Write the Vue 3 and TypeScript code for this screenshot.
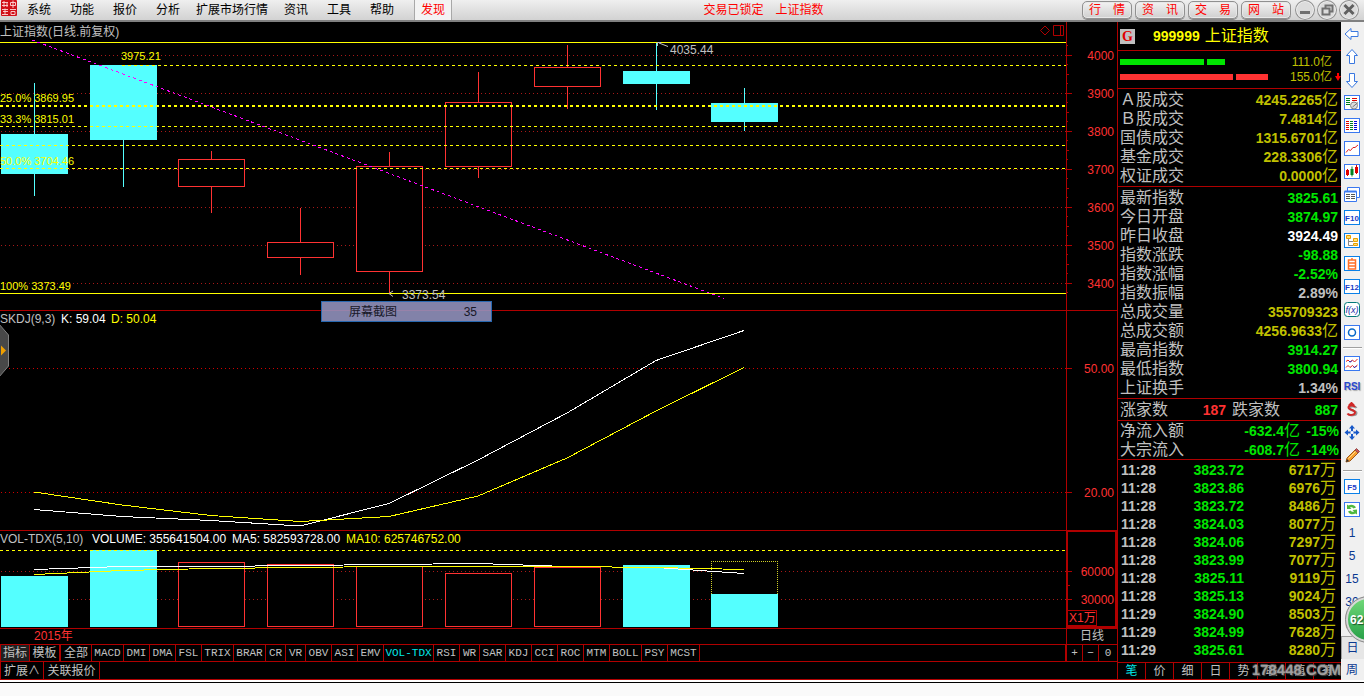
<script setup lang="ts">
interface Candle { x: number; top: number; bottom: number; high: number; low: number; up: boolean; volTop: number }
interface Quote { label: string; value: string; unit?: string; tone: string }
interface Tool { name: string; art?: string; text?: string; cls?: string; sep?: boolean }

const menus = ['系统', '功能', '报价', '分析', '扩展市场行情', '资讯', '工具', '帮助']
const pills = ['行情', '资讯', '交易', '网站']

const candles: Candle[] = [
  { x: 1, top: 134, bottom: 174, high: 83, low: 196, up: false, volTop: 576 },
  { x: 90, top: 65, bottom: 140, high: 65, low: 187, up: false, volTop: 550 },
  { x: 178, top: 159, bottom: 187, high: 151, low: 213, up: true, volTop: 562 },
  { x: 267, top: 242, bottom: 258, high: 208, low: 275, up: true, volTop: 564 },
  { x: 356, top: 166, bottom: 272, high: 152, low: 293, up: true, volTop: 566 },
  { x: 445, top: 102, bottom: 167, high: 72, low: 178, up: true, volTop: 573 },
  { x: 534, top: 67, bottom: 87, high: 45, low: 109, up: true, volTop: 567 },
  { x: 623, top: 71, bottom: 84, high: 43, low: 110, up: false, volTop: 565 },
  { x: 711, top: 103, bottom: 122, high: 88, low: 131, up: false, volTop: 594 },
]
const priceGrid = [4000, 3900, 3800, 3700, 3600, 3500, 3400].map((label, i) => ({ label, y: 55 + i * 38 }))
const minorTicks = Array.from({ length: 27 }, (_, i) => ({ y: Math.round(46 + i * 9.5), w: i % 2 ? 0 : 1 }))
const retrace = [
  { text: '25.0% 3869.95', y: 102 },
  { text: '33.3% 3815.01', y: 123 },
  { text: '50.0% 3704.46', y: 165 },
  { text: '100% 3373.49', y: 290 },
]

const tabs = ['MACD', 'DMI', 'DMA', 'FSL', 'TRIX', 'BRAR', 'CR', 'VR', 'OBV', 'ASI', 'EMV', 'VOL-TDX', 'RSI', 'WR', 'SAR', 'KDJ', 'CCI', 'ROC', 'MTM', 'BOLL', 'PSY', 'MCST']
const tabWidth = (t: string) => `${t.length * 6 + 8}px`

const turnover: Quote[] = [
  { label: 'Ａ股成交', value: '4245.2265', unit: '亿', tone: 'olive' },
  { label: 'Ｂ股成交', value: '7.4814', unit: '亿', tone: 'olive' },
  { label: '国债成交', value: '1315.6701', unit: '亿', tone: 'olive' },
  { label: '基金成交', value: '228.3306', unit: '亿', tone: 'olive' },
  { label: '权证成交', value: '0.0000', unit: '亿', tone: 'olive' },
]
const quotes: Quote[] = [
  { label: '最新指数', value: '3825.61', tone: 'green' },
  { label: '今日开盘', value: '3874.97', tone: 'green' },
  { label: '昨日收盘', value: '3924.49', tone: 'white' },
  { label: '指数涨跌', value: '-98.88', tone: 'green' },
  { label: '指数涨幅', value: '-2.52%', tone: 'green' },
  { label: '指数振幅', value: '2.89%', tone: 'gray' },
  { label: '总成交量', value: '355709323', tone: 'olive' },
  { label: '总成交额', value: '4256.9633', unit: '亿', tone: 'olive' },
  { label: '最高指数', value: '3914.27', tone: 'green' },
  { label: '最低指数', value: '3800.94', tone: 'green' },
  { label: '上证换手', value: '1.34%', tone: 'gray' },
]
const flows = [
  { label: '净流入额', value: '-632.4', pct: '-15%' },
  { label: '大宗流入', value: '-608.7', pct: '-14%' },
]
const ticks = [
  ['11:28', '3823.72', '6717'], ['11:28', '3823.86', '6976'], ['11:28', '3823.72', '8486'],
  ['11:28', '3824.03', '8077'], ['11:28', '3824.06', '7297'], ['11:28', '3823.99', '7077'],
  ['11:28', '3825.11', '9119'], ['11:28', '3825.13', '9024'], ['11:29', '3824.90', '8503'],
  ['11:29', '3824.99', '7628'], ['11:29', '3825.61', '8280'],
]
const sideTabs = ['笔', '价', '细', '日', '势', '联', '值', '筹']

const box = (c = '#3a78f0') => `<rect x=".5" y=".5" width="15" height="14" fill="#fff" stroke="${c}"/>`
const label = (t: string) => `${box('#0a80e8')}<text x="8" y="11" font-size="8" font-weight="700" text-anchor="middle" fill="#1a3cc8">${t}</text>`
const rows = (x: number, c: string) => [3, 5, 7, 9, 11].map(y => `<path d="M${x} ${y}.5h3" stroke="${c}"/>`).join('')

const tools: Tool[] = [
  { name: '后退', art: '<path d="M1 8 7 2.500v3h7v5H7v3z" fill="#fff" stroke="#3a78e0"/>' },
  { name: '上移', art: '<path d="M8 .5 13.500 6.500h-3v8h-5v-8h-3z" fill="#fff" stroke="#3a78e0"/>' },
  { name: '下移', art: '<path d="M8 15.500 13.500 9.500h-3v-8h-5v8h-3z" fill="#fff" stroke="#3a78e0"/>' },
  { name: '报价', art: `${box()}<path d="M2 3.500h4M2 5.500h4M2 7.500h4M2 9.500h4" stroke="#008020"/><path d="M8 3.500h5M8 5.500h5" stroke="#e00000"/><circle cx="10" cy="10.500" r="3.500" fill="#ddd" stroke="#888"/><path d="M8.500 12 14 7.500" stroke="#777"/>` },
  { name: '列表', art: box() + rows(2, '#e00000') + rows(6, '#008020') + rows(10, '#0000e0') },
  { name: '分时', art: `${box()}<path d="M2 11.500 4.500 8.500 6.500 9.500 9 6.500h2L14 4" fill="none" stroke="#e02020"/>` },
  { name: 'K线', art: `${box()}<path d="M2 6h3v5H2zM11 3h3v6h-3z" fill="#e00000"/><path d="M3.500 5v7M12.500 1v9" stroke="#e00000"/><path d="M6.500 5h3v6h-3z" fill="#008020"/><path d="M8 2.500v10" stroke="#008020"/>` },
  { name: '多窗', art: '<path d="M3.500.5h12v10h-12z" fill="#fff" stroke="#3a78f0"/><path d="M.5 4.500h12v10H.5z" fill="#fff" stroke="#3a78f0"/><path d="M.5 4.500h12" stroke="#3a78f0" stroke-width="2"/><path d="M2 7.500h4M7 7.500h4M2 9.500h4M7 9.500h4M2 11.500h4M7 11.500h4" stroke="#555"/>' },
  { name: 'F10', art: label('F10') },
  { name: '树形', art: `${box('#0a80e8')}<path d="M4.500 5v7.500H9M4.500 8.500H9" fill="none" stroke="#888"/><path d="M2.500 2.500h4v3h-4zM9.500 5.500h4v3h-4zM9.500 10.500h4v2h-4z" fill="#ffe070" stroke="#e8a000"/>` },
  { name: '自选', art: `${box('#0a80e8')}<path d="M4.500 4h7v9h-7zM4.500 7h7M4.500 10h7M8 4V2" fill="none" stroke="#ff7028" stroke-width="1.500"/>` },
  { name: 'F12', art: label('F12') },
  { name: '公式', art: '<rect x=".5" y=".5" width="15" height="14" rx="3" fill="#fff" stroke="#007878"/><text x="8" y="11" font-size="9" text-anchor="middle" font-style="italic" fill="#1a2ca8">f(x)</text>' },
  { name: '圆形', art: `${box()}<circle cx="8" cy="7.500" r="3.500" fill="none" stroke="#0868c8" stroke-width="1.500"/>`, sep: true },
  { name: '叠加', art: `${box()}<path d="M2 5.500 4 4l2 2 2.500-2 2 2L13.500 3" fill="none" stroke="#e02020"/><path d="M2 11.500 4 9.500l2 2 2.500-2 2 2L13.500 9" fill="none" stroke="#e02020"/><path d="M5 5.500 6.500 6 8 4.500M9.500 11 11 11.500 12.500 10" fill="none" stroke="#2030d0"/>` },
  { name: 'RSI指标', text: 'RSI', cls: 'rsi' },
  { name: '资金', art: '<path d="M12.500 6c-1-2-7-2-7 .5S12.500 8 12.500 11 5.500 14 4.500 12" fill="none" stroke="#999" stroke-width="2"/><path d="M5 3.500 7.500 1 10 3.500M11 5c-1-2-6.500-2-6.500.5s6.500 2 6.500 5-6.500 3-7.500 1" fill="none" stroke="#d02828" stroke-width="2"/>' },
  { name: '移动', art: '<path d="M8 0 11 3.500H9V6.500h3V4.500L15.500 7.500 12 10.500v-2H9v3h2L8 15 5 11.500h2v-3H4v2L.5 7.500 4 4.500v2h3V3.500H5z" fill="#1858c8"/><circle cx="8" cy="7.500" r="1.500" fill="#fff"/>' },
  { name: '画线', art: '<path d="M2 14 3 10 11 2l3 3-8 8z" fill="#f8a030" stroke="#a05818"/><path d="M11 2l1.500-1.500 3 3L14 5z" fill="#d05050" stroke="#905050"/><path d="M2 14 3 11l2 2z" fill="#333"/><path d="M4.500 10.500 11.500 3.500" stroke="#ffe090"/>', sep: true },
  { name: 'F5', art: label('F5') },
  { name: '刷新', art: `${box()}<path d="M3 7V2.500l1.500 1C7 2 10.500 2.500 12 5.500L9.500 6.500C8.500 5 7 5 6 5.500L7.500 7z" fill="#50b840"/><path d="M13 7.500V12.500l-1.500-1C9 13 5.500 12.500 4 9.500L6.500 8.500C7.500 10 9 10 10 9.500L8.500 8z" fill="#50b840"/>` },
  { name: '1分钟', text: '1' },
  { name: '5分钟', text: '5' },
  { name: '15分钟', text: '15' },
  { name: '30分钟', text: '30' },
  { name: '60分钟', text: '60' },
  { name: '日线', text: '日', cls: 'on' },
  { name: '周线', text: '周', cls: 'week' },
]
</script>

<template>
  <div class="app">
    <header class="top">
      <svg class="logo" width="16" height="16" viewBox="0 0 16 16" aria-hidden="true">
        <rect width="16" height="16" rx="1" fill="#d01018" />
        <path d="M1 2.500h6M3 1v6M1 5.500h6M6 3v4M9.500 2.500h5v3h-5zM12 .5V8M1 9.500h6M2 11.500h5M4 8.500v6M1 14.500h6M9 9.500h6M10 11.500h4v3h-4z" fill="none" stroke="#ffd8d8" stroke-width=".9" />
      </svg>
      <nav class="menus">
        <button v-for="m in menus" :key="m" type="button">{{ m }}</button>
      </nav>
      <button class="found" type="button">发现</button>
      <div class="state"><span>交易已锁定</span><span>上证指数</span></div>
      <nav class="pills">
        <button v-for="p in pills" :key="p" type="button"><span>{{ p[0] }}</span><span>{{ p[1] }}</span></button>
      </nav>
      <div class="wins">
        <button type="button" aria-label="最小化"><svg width="20" height="20"><path d="M5 12.500h10" stroke="#707070" stroke-width="3" /></svg></button>
        <button type="button" aria-label="还原"><svg width="20" height="20"><path d="M8.500 8V5.500h7v6H13M5.500 8.500h7v6h-7z" fill="none" stroke="#707070" stroke-width="2" /></svg></button>
        <button type="button" aria-label="关闭"><svg width="20" height="20"><path d="M5.500 5 14.500 14M14.500 5 5.500 14" stroke="#606060" stroke-width="3" /></svg></button>
      </div>
    </header>

    <main class="body">
      <section class="left">
        <div class="panel">
          <svg class="plot price">
            <g transform="translate(0,-22)">
              <line v-for="g in priceGrid" :key="g.label" class="dots" x1="1" x2="100%" :y1="g.y + .5" :y2="g.y + .5" />
              <g v-for="c in candles" :key="c.x" :class="c.up ? 'up' : 'down'">
                <rect class="wick" :x="c.x + 33" :y="c.high" width="1" :height="c.low - c.high" />
                <rect v-if="c.up" class="hollow" :x="c.x + .5" :y="c.top + .5" width="66" :height="c.bottom - c.top - 1" />
                <rect v-else class="solid" :x="c.x" :y="c.top" width="67" :height="c.bottom - c.top" />
              </g>
              <line class="yl" x1="0" x2="100%" y1="42.500" y2="42.500" />
              <line class="yl dash" x1="122" x2="100%" y1="65.500" y2="65.500" />
              <line class="yl dash thick" x1="0" x2="100%" y1="106" y2="106" />
              <line class="yl dash" x1="0" x2="100%" y1="126.500" y2="126.500" />
              <line class="yl dash" x1="0" x2="100%" y1="145.500" y2="145.500" />
              <line class="yl dash" x1="0" x2="100%" y1="168.500" y2="168.500" />
              <line class="yl" x1="0" x2="100%" y1="293.500" y2="293.500" />
              <line class="trend" x1="32" y1="40" x2="724" y2="298.500" />
              <text class="t-gray" x="0" y="36">上证指数(日线.前复权)</text>
              <text class="t-small" x="121" y="60">3975.21</text>
              <text v-for="r in retrace" :key="r.text" class="t-small" x="0" :y="r.y">{{ r.text }}</text>
              <path class="mark" d="M657.500 46V42.500H661M659 43 668 46.500M393 291 389 293.500 393 296.500" />
              <text class="t-gray" x="670" y="54">4035.44</text>
              <text class="t-gray" x="402" y="299">3373.54</text>
            </g>
          </svg>
          <svg class="corner" width="24" height="12" aria-hidden="true">
            <path d="M5 1 9.500 5.500 5 10 .5 5.500zM13.500.5h10v10h-10zM20.500.5v10" fill="none" stroke="#b00000" />
          </svg>
          <svg class="axis price">
            <g transform="translate(0,-22)">
              <path v-for="(t, i) in minorTicks" :key="i" class="tick" :d="`M0 ${t.y - .5}h${t.w ? 1 : 2}`" />
              <g v-for="g in priceGrid" :key="g.label">
                <path class="tick" :d="`M0 ${g.y + .5}h5`" />
                <text x="47" :y="g.y + 5">{{ g.label }}</text>
              </g>
            </g>
          </svg>
          <div class="hint"><span>屏幕截图</span><span>35</span></div>
        </div>

        <div class="panel ruled">
          <svg class="plot skdj">
            <g transform="translate(0,-311)">
              <line class="dots bright" x1="1" x2="100%" y1="368.500" y2="368.500" />
              <line class="dots bright" x1="1" x2="100%" y1="492.500" y2="492.500" />
              <polyline class="w" points="34,509.500 122,516.500 211,520.500 300,526 389,503.500 478,460 567,413 656,360.500 744,330.500" />
              <polyline class="y" points="34,492 122,505 211,515.500 300,521.500 389,516.500 478,496 567,458 656,411 744,367.500" />
              <text class="t-gray" x="0" y="323">SKDJ(9,3)</text>
              <text class="t-white" x="61" y="323">K: 59.04</text>
              <text class="t-yellow" x="111" y="323">D: 50.04</text>
            </g>
          </svg>
          <svg class="axis skdj">
            <g transform="translate(0,-311)">
              <path class="tick" d="M0 368.500h5M0 492.500h5" />
              <text x="47" y="373">50.00</text>
              <text x="47" y="497">20.00</text>
            </g>
          </svg>
          <button class="drawer" type="button" aria-label="展开侧栏">
            <svg width="10" height="56" viewBox="0 0 10 56">
              <path d="M-1 1 8.500 12v31L-1 54z" fill="#484848" stroke="#808080" />
              <path d="M1 22.500 6 27.500 1 32.500z" fill="#f0a000" />
            </svg>
          </button>
        </div>

        <div class="panel ruled">
          <svg class="plot vol">
            <g transform="translate(0,-531)">
              <line class="dots" x1="1" x2="100%" y1="571.500" y2="571.500" />
              <line class="dots" x1="1" x2="100%" y1="599.500" y2="599.500" />
              <rect x="711" y="561" width="67" height="34" fill="#000" />
              <path class="est" d="M711 561.500H778M711.500 561V594M777.500 561V594" />
              <g v-for="c in candles" :key="c.x" :class="c.up ? 'up' : 'down'">
                <rect v-if="c.up" class="hollow" :x="c.x + .5" :y="c.volTop + .5" width="66" :height="626 - c.volTop" />
                <rect v-else class="solid" :x="c.x" :y="c.volTop" width="67" :height="627 - c.volTop" />
              </g>
              <line class="yl dash" x1="0" x2="100%" y1="550.500" y2="550.500" />
              <polyline class="w" points="34,569.500 122,566.500 211,566.500 300,565.500 389,564.500 478,563.500 567,566.500 656,567.500 744,573.500" />
              <polyline class="y" points="34,574.500 122,570.500 211,568.500 300,567.500 389,566.500 567,566.500 656,567.500 744,569.500" />
              <text class="t-gray" x="0" y="543">VOL-TDX(5,10)</text>
              <text class="t-white" x="92" y="543">VOLUME: 355641504.00</text>
              <text class="t-white" x="232" y="543">MA5: 582593728.00</text>
              <text class="t-yellow" x="346" y="543">MA10: 625746752.00</text>
            </g>
          </svg>
          <div class="axis boxed">
            <svg width="47" height="94">
              <g transform="translate(0,-532)">
                <path class="tick" d="M0 571.500h4M0 585.500h2M0 599.500h4" />
                <text x="46" y="576">60000</text>
                <text x="46" y="604">30000</text>
              </g>
            </svg>
            <span class="scale">X1万</span>
          </div>
        </div>

        <div class="daterow"><span class="year">2015年</span><span class="period">日线</span></div>

        <div class="tabrow">
          <button class="cjk first" type="button">指标</button>
          <button class="cjk second" type="button">模板</button>
          <button class="cjk" type="button">全部</button>
          <button v-for="t in tabs" :key="t" type="button" :class="{ sel: t === 'VOL-TDX' }" :style="{ width: tabWidth(t) }">{{ t }}</button>
          <div class="zoomers">
            <button type="button">+</button><button type="button">−</button><button type="button">0</button>
          </div>
        </div>
        <div class="tabrow low">
          <button class="ext" type="button">扩展∧</button>
          <button class="link" type="button">关联报价</button>
        </div>
      </section>

      <aside class="side">
        <div class="ident"><b class="g">G</b><b class="code">999999</b><span>上证指数</span></div>
        <div class="bars">
          <div class="bar buy"><i class="long"></i><i class="short"></i><span>111.0亿</span></div>
          <div class="bar sell"><i class="long"></i><i class="short"></i><span>155.0亿</span>
            <svg width="6" height="8"><path d="M2 0h2v3h2L3 8 0 3h2z" fill="#f00" /></svg>
          </div>
        </div>
        <table class="block">
          <tbody>
            <tr v-for="q in turnover" :key="q.label"><th scope="row">{{ q.label }}</th><td :class="q.tone"><b>{{ q.value }}</b>{{ q.unit }}</td></tr>
          </tbody>
        </table>
        <table class="block">
          <tbody>
            <tr v-for="q in quotes" :key="q.label"><th scope="row">{{ q.label }}</th><td :class="q.tone"><b>{{ q.value }}</b>{{ q.unit }}</td></tr>
          </tbody>
        </table>
        <div class="updown"><span>涨家数</span><b class="red">187</b><span class="fall">跌家数</span><b class="green">887</b></div>
        <table class="block flows">
          <tbody>
            <tr v-for="f in flows" :key="f.label"><th scope="row">{{ f.label }}</th><td class="green"><b>{{ f.value }}</b>亿</td><td class="green pct"><b>{{ f.pct }}</b></td></tr>
          </tbody>
        </table>
        <table class="ticks">
          <tbody>
            <tr v-for="(t, i) in ticks" :key="i"><td class="gray"><b>{{ t[0] }}</b></td><td class="green"><b>{{ t[1] }}</b></td><td class="olive"><b>{{ t[2] }}</b>万</td></tr>
          </tbody>
        </table>
        <nav class="sidetabs">
          <button v-for="(s, i) in sideTabs" :key="s" type="button" :class="{ sel: i === 0 }">{{ s }}</button>
        </nav>
        <span class="mark-text">178448.COM</span>
      </aside>

      <nav class="tools">
        <template v-for="t in tools" :key="t.name">
          <button type="button" :aria-label="t.name" :class="t.cls">
            <svg v-if="t.art" width="16" height="16" viewBox="0 0 16 16" v-html="t.art"></svg>
            <template v-else>{{ t.text }}</template>
          </button>
          <hr v-if="t.sep">
        </template>
        <button class="ball" type="button" aria-label="加速球"><span>62</span></button>
      </nav>
    </main>
    <footer class="foot"></footer>
  </div>
</template>

<style>
html, body { background: #fafafa; }
</style>

<style scoped>
.app {
  --line: #b00000;
  min-height: 100vh;
  display: flex;
  flex-direction: column;
  overflow: hidden;
  font: 12px/16px "Liberation Sans", "Noto Sans CJK SC", sans-serif;
  color: #c0c0c0;
  background: #fafafa;
}
.app *, .app { box-sizing: border-box; }
button { margin: 0; padding: 0; border: 0; background: none; color: inherit; font: inherit; white-space: nowrap; }
svg { display: block; flex: none; }
b { font-weight: 700; font-size: 14px; }

.top {
  height: 22px;
  flex: none;
  display: flex;
  align-items: flex-start;
  padding: 0 5px 0 1px;
  color: #000;
  background: linear-gradient(#efefef, #d2d2d2);
  border-bottom: 2px solid #808080;
}
.menus { display: flex; }
.menus button { padding: 0 9px 0 10px; height: 19px; }
.menus button:nth-child(5) { padding: 0 7px 0 7px; }
.menus button:nth-child(n + 6) { padding: 0 10px 0 9px; }
.found { width: 38px; height: 20px; margin-left: 10px; color: #f00; background: #f3f3f3; border: solid #a8a8a8; border-width: 0 1px; }
.state { flex: 1; display: flex; justify-content: center; gap: 12px; padding-right: 7px; line-height: 20px; color: #f00; }
.pills { display: flex; gap: 3px; margin-right: 4px; }
.pills button {
  width: 50px;
  height: 18px;
  margin-top: 1px;
  padding: 0 6px;
  display: flex;
  align-items: center;
  justify-content: space-between;
  color: #f00;
  border: 1px solid #909090;
  border-radius: 5px;
  background: linear-gradient(#f2f2f2, #cfcfcf);
  box-shadow: inset 0 0 0 1px #e8e8e8, 0 1px 0 #888;
}
.wins { display: flex; gap: 2px; }
.wins button { width: 20px; height: 20px; border-radius: 50%; box-shadow: inset 0 0 0 1px #909090, inset 0 0 0 2px #eee; background: #dcdcdc; }

.body { display: flex; background: #000; }
.left { flex: 1; min-width: 0; border-bottom: 1px solid var(--line); }
.panel { position: relative; display: flex; }
.ruled { border-top: 1px solid var(--line); }
.plot { flex: 1; min-width: 0; width: 0; }
.axis { flex: none; width: 51px; border-left: 1px solid var(--line); }
.price { height: 288px; }
.skdj { height: 219px; }
.vol { height: 97px; }
.axis text { fill: #ff3232; text-anchor: end; }
.tick { stroke: var(--line); }
.dots { stroke: #a81818; stroke-dasharray: 1 3; shape-rendering: crispEdges; }
.bright { stroke: #d00000; }
.yl { stroke: #ff0; shape-rendering: crispEdges; }
.dash { stroke-dasharray: 3 3; }
.thick { stroke-width: 2; }
.trend { stroke: #f0f; stroke-dasharray: 3 3; shape-rendering: crispEdges; }
.down rect { fill: #54ffff; }
.up .wick { fill: #ff3232; }
.up .hollow { fill: #000; stroke: #ff3232; }
.est { fill: none; stroke: #d0d028; stroke-dasharray: 1 1; }
.w, .y { fill: none; stroke: #fff; shape-rendering: crispEdges; }
.y { stroke: #ff0; }
.mark { fill: none; stroke: #c0c0c0; }
.t-gray { fill: #c0c0c0; }
.t-white { fill: #fff; }
.t-yellow { fill: #ff0; }
.t-small { fill: #ff0; font-size: 11px; }
.corner { position: absolute; right: 53px; top: 3px; }
.hint {
  position: absolute;
  left: 321px;
  bottom: -12px;
  z-index: 2;
  width: 171px;
  height: 21px;
  padding: 0 14px 0 27px;
  display: flex;
  justify-content: space-between;
  align-items: center;
  color: #181828;
  background: rgba(148, 148, 192, .88);
  border: 1px solid #2868b0;
}
.drawer { position: absolute; left: 0; top: 12px; }
.boxed { position: relative; border: 2px solid var(--line); margin-top: -1px; }
.scale { position: absolute; left: 0; bottom: 0; width: 29px; height: 16px; padding-left: 1px; line-height: 14px; color: #ff3232; border: 1px solid var(--line); border-left: 0; }
.daterow { display: flex; height: 16px; line-height: 15px; border-top: 1px solid var(--line); }
.year { flex: 1; padding-left: 34px; color: #ff3232; }
.period { width: 51px; text-align: center; border-left: 1px solid var(--line); }
.tabrow { display: flex; height: 17px; line-height: 16px; border-top: 1px solid var(--line); }
.tabrow button { border-right: 1px solid var(--line); font: 11px/16px "Liberation Mono", monospace; text-align: center; overflow: hidden; }
.tabrow .cjk, .tabrow .ext, .tabrow .link { width: 31px; font: 12px/16px "Liberation Sans", "Noto Sans CJK SC", sans-serif; }
.tabrow .first { width: 30px; background: #202020; border-left: 1px solid var(--line); }
.tabrow .second { border-right-width: 2px; }
.tabrow .sel, .sidetabs .sel { color: #00e8e8; }
.zoomers { margin-left: auto; display: flex; border-left: 2px solid var(--line); }
.zoomers button { width: 16px; }
.zoomers button:last-child { width: 18px; border-right: 0; }
.low { height: 18px; }
.tabrow .ext { width: 44px; border-left: 1px solid var(--line); }
.tabrow .link { width: 56px; }

.side { position: relative; flex: none; width: 224px; border-left: 1px solid var(--line); border-bottom: 1px solid var(--line); font-size: 16px; }
.ident { display: flex; align-items: center; height: 29px; padding: 0 2px; color: #ff0; border-bottom: 1px solid var(--line); }
.g { width: 15px; height: 15px; margin-right: 18px; text-align: center; line-height: 15px; font-family: "Liberation Serif", serif; color: #e00000; background: #c0c0c0; }
.code { margin-right: 5px; }
.bars { height: 38px; padding: 3px 9px 0 2px; border-bottom: 1px solid var(--line); font-size: 12px; }
.bar { display: flex; align-items: center; height: 15px; gap: 3px; position: relative; color: #c0c000; }
.bar i { height: 6px; background: #00e600; }
.bar span { margin-left: auto; }
.bar svg { position: absolute; right: -9px; }
.buy .long { width: 84px; }
.buy .short { width: 18px; }
.sell i { background: #ff3232; }
.sell .long { width: 113px; }
.sell .short { width: 32px; }
table { width: 100%; border-collapse: collapse; border-spacing: 0; }
th { font-weight: 400; text-align: left; padding: 0 0 0 2px; }
td { text-align: right; padding: 0 3px 0 0; }
.block { display: block; border-bottom: 1px solid var(--line); padding: 1px 0; }
.block tbody { display: block; }
.block tr { display: flex; height: 19px; line-height: 19px; }
.block th { flex: 1; }
.flows .pct { width: 41px; padding-right: 2px; }
.updown + .flows { padding: 0; }
.flows td { padding: 0; }
.updown { display: flex; height: 22px; line-height: 22px; padding: 0 3px 0 2px; border-bottom: 1px solid var(--line); }
.updown .red { width: 58px; text-align: right; }
.fall { margin-left: 6px; }
.updown .green { margin-left: auto; }
.ticks { margin: 1px 0 3px; }
.ticks tr { height: 18px; line-height: 18px; }
.ticks td:first-child { text-align: left; padding-left: 3px; width: 50px; }
.ticks td:nth-child(2) { width: 76px; padding: 0; }
.ticks td:last-child { padding-right: 5px; }
.olive { color: #c0c000; }
.green { color: #00e600; }
.red { color: #ff3232; }
.white { color: #fff; }
.gray { color: #c0c0c0; }
.sidetabs { display: flex; border-top: 1px solid var(--line); height: 17px; font-size: 12px; }
.sidetabs button { flex: 1; line-height: 16px; border-right: 1px solid var(--line); }
.sidetabs button:last-child { border-right: 0; }
.mark-text {
  position: absolute;
  right: 0;
  bottom: -2px;
  font: 700 15px/22px "Liberation Sans", sans-serif;
  color: rgba(176, 176, 176, .85);
  text-shadow: 1px 1px 1px #444, 0 -1px 1px #666;
}

.tools { position: relative; flex: none; width: 23px; background: #f0f0f0; color: #0a3890; }
.tools button { display: flex; align-items: center; justify-content: center; width: 23px; height: 23px; padding-right: 1px; }
.tools hr { height: 2px; margin: 3px 2px; border: 0; background: #a0a0a0; border-bottom: 1px solid #fff; }
.tools .rsi { font-weight: 700; font-size: 10px; color: #2848d0; text-shadow: 1px 1px 1px #aaa; }
.tools .on { background: #e6e6e6; border: solid #a0a0a0; border-width: 1px 0 0 1px; }
.tools .week { height: 21px; }
.tools .ball {
  position: absolute;
  right: -28px;
  bottom: 37px;
  width: 47px;
  height: 47px;
  padding: 0;
  justify-content: flex-start;
  border-radius: 50%;
  border: 3px solid #d8d8d8;
  outline: 1px solid #888;
  outline-offset: -1px;
  background: linear-gradient(#70d878, #28a048);
  color: #fff;
}
.ball span { padding-left: 2px; font-size: 12px; font-weight: 700; text-shadow: 1px 1px 1px #185828; }
.foot { flex: 1; background: #fafafa; box-shadow: inset 0 2px 0 #fff, inset 0 3px 0 #000; }
</style>
